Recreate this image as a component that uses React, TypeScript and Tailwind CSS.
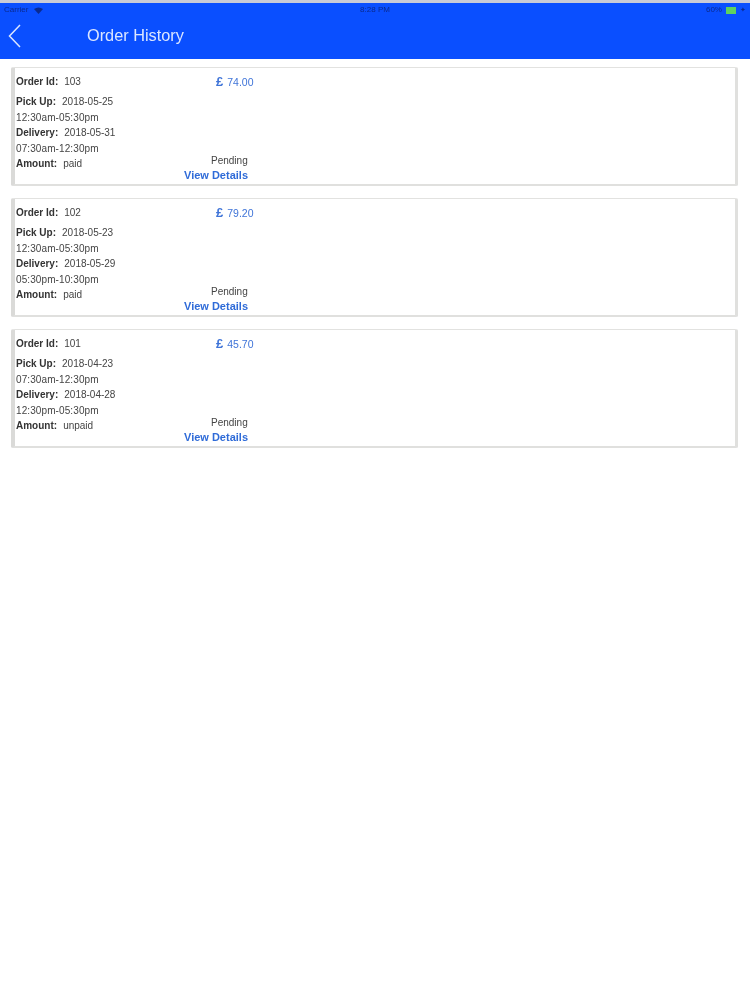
import React from 'react';

interface Order {
  id: string;
  price: string;
  pickDate: string;
  pickTime: string;
  deliveryDate: string;
  deliveryTime: string;
  amount: string;
}

const orders: Order[] = [
  { id: '103', price: '74.00', pickDate: '2018-05-25', pickTime: '12:30am-05:30pm', deliveryDate: '2018-05-31', deliveryTime: '07:30am-12:30pm', amount: 'paid' },
  { id: '102', price: '79.20', pickDate: '2018-05-23', pickTime: '12:30am-05:30pm', deliveryDate: '2018-05-29', deliveryTime: '05:30pm-10:30pm', amount: 'paid' },
  { id: '101', price: '45.70', pickDate: '2018-04-23', pickTime: '07:30am-12:30pm', deliveryDate: '2018-04-28', deliveryTime: '12:30pm-05:30pm', amount: 'unpaid' },
];

const Label: React.FC<{ name: string; value: string }> = ({ name, value }) => (
  <div className="h-[15.5px] leading-[15.5px] whitespace-nowrap">
    <span className="font-bold text-[#333]">{name}:</span>
    <span className="ml-[6px] text-[#444]">{value}</span>
  </div>
);

const OrderCard: React.FC<{ order: Order }> = ({ order }) => (
  <div className="flex h-[119px] border border-[#e2e2e0] border-l-[4px] border-r-[3px] border-b-[2px] border-l-[#dadad8] border-r-[#e0e0de] border-b-[#e0e0de] rounded-[2px] bg-white pl-[1px] text-[10px]">
    <div className="flex w-[168px] flex-col pt-[6px]">
      <Label name="Order Id" value={order.id} />
      <div className="mt-[4.500px]">
        <Label name="Pick Up" value={order.pickDate} />
      </div>
      <div className="h-[15.5px] leading-[15.5px] tracking-[0.1px] text-[#444]">{order.pickTime}</div>
      <Label name="Delivery" value={order.deliveryDate} />
      <div className="h-[15.5px] leading-[15.5px] tracking-[0.1px] text-[#444]">{order.deliveryTime}</div>
      <Label name="Amount" value={order.amount} />
    </div>
    <div className="flex w-[72px] flex-col pt-[6px]">
      <div className="ml-[32px] h-[16px] whitespace-nowrap leading-[16px] text-[#3f74d8]">
        <span className="text-[13px] font-semibold">£</span>
        <span className="ml-[4px] text-[10.5px]">{order.price}</span>
      </div>
      <div className="ml-[27px] mt-[64px] h-[13px] whitespace-nowrap leading-[14px] text-[#444]">Pending</div>
      <div className="h-[16px] whitespace-nowrap text-[11px] font-bold leading-[16px] text-[#2f6bd8]">View Details</div>
    </div>
  </div>
);

export default function App() {
  return (
    <div className="min-h-[1000px] bg-white font-['Liberation_Sans',Arial,sans-serif] blur-[0.4px]">
      <div className="h-[3px] bg-[#c9cbd6]" />
      <div className="h-[56px] bg-[#0a4fff]">
        <div className="flex h-[14px] items-center justify-between px-[4px] text-[8px] text-[#0b2a8f]">
          <div className="flex w-[60px] items-center gap-[6px]">
            <span>Carrier</span>
            <svg width="9" height="7" viewBox="0 0 9 7"><path d="M0 2 Q4.500 -1 9 2 L4.500 7 Z" fill="#0b2a8f" /></svg>
          </div>
          <span>8:28 PM</span>
          <div className="flex w-[60px] items-center justify-end gap-[4px]">
            <span>60%</span>
            <div className="h-[7px] w-[10px] bg-[#5fd25f]" />
            <span className="text-[7px]">✦</span>
          </div>
        </div>
        <div className="flex h-[37px] items-center">
          <svg className="ml-[8px]" width="13" height="24" viewBox="0 0 13 24" fill="none" stroke="#dbe6ff" strokeWidth="1.5">
            <path d="M12 1 L1.500 12 L12 23" />
          </svg>
          <span className="ml-[66px] text-[16.3px] text-[#dbe6ff]">Order History</span>
        </div>
      </div>
      <div className="flex flex-col gap-[12px] pl-[11px] pr-[12px] pt-[8px]">
        {orders.map(order => (
          <OrderCard key={order.id} order={order} />
        ))}
      </div>
    </div>
  );
}
